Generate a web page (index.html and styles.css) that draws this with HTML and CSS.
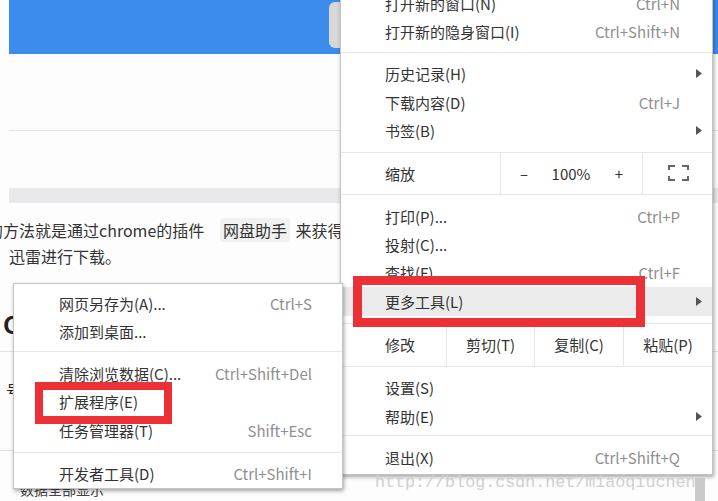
FILE: index.html
```html
<!DOCTYPE html>
<html lang="zh-CN">
<head>
  <meta charset="UTF-8">
  <meta name="viewport" content="width=device-width, initial-scale=1.0">
  <title>更多工具 - 扩展程序</title>
  <link rel="stylesheet" href="styles.css">
</head>
<body>
  <div class="page">
    <div class="topbar">
      <div class="search-btn"></div>
    </div>
    <div class="tabs"></div>
    <div class="toolbar-space"></div>
    <div class="gray-band"></div>
    <div class="article">
      <p class="line line-one"><span>的</span>方法就是通过chrome的插件 <code>网盘助手</code> 来获得</p>
      <p class="line line-two">迅雷进行下载。</p>
      <h2 class="heading">C</h2>
      <div class="rule"></div>
      <p class="mark">号</p>
      <div class="rule rule-low"></div>
      <p class="foot">数据全部显示</p>
    </div>
  </div>

  <!-- chrome main menu -->
  <div class="menu main-menu">
    <div class="group first">
      <div class="item"><span class="label">打开新的窗口(N)</span><span class="key">Ctrl+N</span></div>
      <div class="item"><span class="label">打开新的隐身窗口(I)</span><span class="key">Ctrl+Shift+N</span></div>
    </div>
    <div class="group">
      <div class="item"><span class="label">历史记录(H)</span><svg class="arrow" width="6" height="9" viewBox="0 0 6 9"><polygon points="0,0 6,4.5 0,9" fill="#555"/></svg></div>
      <div class="item"><span class="label">下载内容(D)</span><span class="key">Ctrl+J</span></div>
      <div class="item"><span class="label">书签(B)</span><svg class="arrow" width="6" height="9" viewBox="0 0 6 9"><polygon points="0,0 6,4.5 0,9" fill="#555"/></svg></div>
    </div>
    <div class="zoom-row">
      <div class="cell-label">缩放</div>
      <div class="zoom-ctrl">
        <span>–</span>
        <span>100%</span>
        <span>+</span>
      </div>
      <div class="cell-full">
        <svg width="21" height="16" viewBox="0 0 21 16">
          <path d="M1 5V1h6M14 1h6v4M1 11v4h6M14 15h6v-4" fill="none" stroke="#666" stroke-width="2"/>
        </svg>
      </div>
    </div>
    <div class="group">
      <div class="item"><span class="label">打印(P)...</span><span class="key">Ctrl+P</span></div>
      <div class="item"><span class="label">投射(C)...</span></div>
      <div class="item"><span class="label">查找(F)</span><span class="key">Ctrl+F</span></div>
      <div class="item active"><span class="label">更多工具(L)</span><svg class="arrow" width="6" height="9" viewBox="0 0 6 9"><polygon points="0,0 6,4.5 0,9" fill="#555"/></svg></div>
    </div>
    <div class="edit-row">
      <div class="cell-label">修改</div>
      <div class="cell">剪切(T)</div>
      <div class="cell">复制(C)</div>
      <div class="cell">粘贴(P)</div>
    </div>
    <div class="group tight">
      <div class="item"><span class="label">设置(S)</span></div>
      <div class="item"><span class="label">帮助(E)</span><svg class="arrow" width="6" height="9" viewBox="0 0 6 9"><polygon points="0,0 6,4.5 0,9" fill="#555"/></svg></div>
    </div>
    <div class="group last">
      <div class="item"><span class="label">退出(X)</span><span class="key">Ctrl+Shift+Q</span></div>
    </div>
  </div>

  <div class="mark-box main-box"></div>

  <!-- more tools submenu -->
  <div class="menu sub-menu">
    <div class="group sub-first">
      <div class="item"><span class="label">网页另存为(A)...</span><span class="key">Ctrl+S</span></div>
      <div class="item"><span class="label">添加到桌面...</span></div>
    </div>
    <div class="group sub-mid">
      <div class="item"><span class="label">清除浏览数据(C)...</span><span class="key">Ctrl+Shift+Del</span></div>
      <div class="item"><span class="label">扩展程序(E)</span></div>
      <div class="item"><span class="label">任务管理器(T)</span><span class="key">Shift+Esc</span></div>
    </div>
    <div class="group sub-last">
      <div class="item"><span class="label">开发者工具(D)</span><span class="key">Ctrl+Shift+I</span></div>
    </div>
  </div>

  <div class="mark-box sub-box"></div>

  <div class="scroll-thumb"></div>
  <div class="watermark">http://blog.csdn.net/miaoqiuchen</div>
</body>
</html>
```

FILE: styles.css
```css
body {
  margin: 0;
  width: 718px;
  height: 501px;
  overflow: hidden;
  position: relative;
  background-color: #fdfdfd;
  font-family: "Noto Sans CJK SC", "Noto Sans", sans-serif;
  color: #333;
}

/* page behind the menus */
.topbar {
  height: 54px;
  margin-left: 9px;
  background-color: #3b8cec;
  display: flex;
}

.search-btn {
  margin: 2px 0 0 320px;
  width: 30px;
  height: 46px;
  border-radius: 6px;
  background-color: #d8d8d8;
}

.tabs {
  height: 76px;
  margin-left: 9px;
  border-bottom: 1px solid #e3e3e3;
}

.toolbar-space {
  height: 57px;
}

.gray-band {
  height: 15px;
  margin-left: 9px;
  background-color: #e9e9eb;
}

.article {
  padding-top: 14px;
  font-size: 16px;
}

.line {
  margin: 0;
  line-height: 26px;
  white-space: nowrap;
}

.line-one {
  margin-left: -13px;
  word-spacing: 2px;
}

.line-two {
  padding-left: 9px;
}

.line code {
  font-family: inherit;
  background-color: #f1f1f1;
  margin-left: 10px;
  padding: 0 3px;
  border-radius: 3px;
}

.heading {
  margin: 41px 0 0 3px;
  font-size: 24px;
  line-height: 28px;
  color: #222;
}

.rule {
  margin-top: 13px;
  border-top: 1px solid #e2e2e2;
}

.rule-low {
  margin-top: 47px;
}

.mark {
  margin: 25px 0 0 6px;
  line-height: 26px;
  color: #222;
}

.foot {
  margin: 25px 0 0 20px;
  font-size: 14px;
  line-height: 26px;
  color: #444;
}

/* menus */
.menu {
  position: absolute;
  background-color: #fff;
  border: 1px solid #c4c4c4;
  box-shadow: 1px 2px 4px rgba(0, 0, 0, 0.35);
  font-size: 15px;
}

.main-menu {
  left: 340px;
  top: -19px;
  width: 371px;
}

.sub-menu {
  left: 13px;
  top: 283px;
  width: 328px;
}

.group {
  padding: 7px 0;
  border-bottom: 1px solid #e6e6e6;
}

.group.first { padding-bottom: 6px; }
.group.tight { padding-bottom: 5px; }
.group.last { padding-bottom: 2px; border-bottom: none; }

.item {
  display: flex;
  align-items: center;
  height: 28.4px;
  padding: 0 32px 0 44px;
  white-space: nowrap;
}

.item.active {
  background-color: #ebebeb;
}

.label {
  flex: 1;
}

.key {
  color: #8f8f8f;
}

.arrow {
  margin-right: -22px;
}

.zoom-row {
  display: grid;
  grid-template-columns: 159px 142px 70px;
  height: 41px;
  border-bottom: 1px solid #e6e6e6;
}

.cell-label {
  display: flex;
  align-items: center;
  padding-left: 44px;
}

.zoom-ctrl {
  display: grid;
  grid-template-columns: 46px 48px 48px;
  align-items: center;
  text-align: center;
  border-left: 1px solid #e6e6e6;
  box-sizing: border-box;
}

.cell-full {
  display: flex;
  align-items: center;
  justify-content: center;
  border-left: 1px solid #e6e6e6;
  padding-left: 2px;
}

.edit-row {
  display: grid;
  grid-template-columns: 105px 88px 89px 89px;
  height: 42px;
  border-bottom: 1px solid #e6e6e6;
}

.edit-row .cell {
  display: flex;
  align-items: center;
  justify-content: center;
  border-left: 1px solid #e6e6e6;
}

.sub-menu .item {
  height: 28.5px;
  padding: 0 30px 0 45px;
}

.group.sub-first { padding: 5px 0; }
.group.sub-mid { padding: 7px 0 7.5px; }
.group.sub-last { padding: 6px 0 0.5px; border-bottom: none; }

/* red annotation boxes */
.mark-box {
  position: absolute;
  border: 9px solid #ec3136;
}

.main-box {
  left: 353px;
  top: 276px;
  width: 274px;
  height: 33px;
}

.sub-box {
  left: 35px;
  top: 382px;
  width: 121px;
  height: 26px;
  border-width: 8px;
}

.scroll-thumb {
  position: absolute;
  left: 695px;
  top: 478px;
  width: 10px;
  height: 23px;
  background-color: #cacaca;
}

.watermark {
  position: absolute;
  left: 375px;
  top: 473px;
  font-family: "Liberation Mono", monospace;
  font-size: 16.7px;
  line-height: 20px;
  color: #cfcfcf;
  white-space: nowrap;
}
```
